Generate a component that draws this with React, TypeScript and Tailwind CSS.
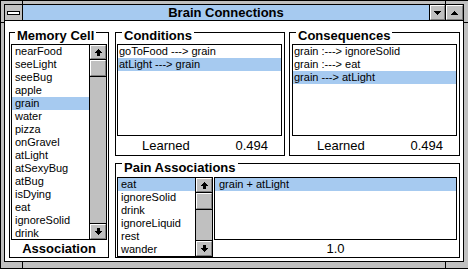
import React from 'react';

const memoryCells = [
  'nearFood', 'seeLight', 'seeBug', 'apple', 'grain', 'water', 'pizza', 'onGravel',
  'atLight', 'atSexyBug', 'atBug', 'isDying', 'eat', 'ignoreSolid', 'drink',
];
const conditions = ['goToFood ---> grain', 'atLight ---> grain'];
const consequences = ['grain :---> ignoreSolid', 'grain :---> eat', 'grain ---> atLight'];
const painActions = ['eat', 'ignoreSolid', 'drink', 'ignoreLiquid', 'rest', 'wander'];
const painPairs = ['grain + atLight'];

// little pixel glyphs, drawn as rects so they stay crisp
const ScrollUp = () => (
  <svg width="7" height="7" viewBox="0 0 7 7" shapeRendering="crispEdges">
    <rect x="3" y="0" width="1" height="1" fill="#000" />
    <rect x="2" y="1" width="3" height="1" fill="#000" />
    <rect x="1" y="2" width="5" height="1" fill="#000" />
    <rect x="0" y="3" width="7" height="1" fill="#000" />
    <rect x="2" y="4" width="3" height="3" fill="#000" />
  </svg>
);

const ScrollDown = () => (
  <svg width="7" height="7" viewBox="0 0 7 7" shapeRendering="crispEdges">
    <rect x="2" y="0" width="3" height="3" fill="#000" />
    <rect x="0" y="3" width="7" height="1" fill="#000" />
    <rect x="1" y="4" width="5" height="1" fill="#000" />
    <rect x="2" y="5" width="3" height="1" fill="#000" />
    <rect x="3" y="6" width="1" height="1" fill="#000" />
  </svg>
);

const Triangle = ({ up }: { up?: boolean }) => (
  <svg width="7" height="4" viewBox="0 0 7 4" shapeRendering="crispEdges">
    <rect x="0" y={up ? 3 : 0} width="7" height="1" fill="#000" />
    <rect x="1" y={up ? 2 : 1} width="5" height="1" fill="#000" />
    <rect x="2" y={up ? 1 : 2} width="3" height="1" fill="#000" />
    <rect x="3" y={up ? 0 : 3} width="1" height="1" fill="#000" />
  </svg>
);

const Bevel: React.FC<{ children?: React.ReactNode }> = ({ children }) => (
  <div className="flex h-full w-full items-center justify-center border border-t-white border-l-white border-b-[#808080] border-r-[#808080] bg-[#c0c0c0]">
    {children}
  </div>
);

function ScrollBar() {
  return (
    <div className="flex w-[17px] shrink-0 flex-col border-l border-black bg-[#c0c0c0]">
      <div className="h-[15px] shrink-0 border-b border-black">
        <Bevel>
          <ScrollUp />
        </Bevel>
      </div>
      <div className="h-[17px] shrink-0 border-b border-black">
        <Bevel />
      </div>
      <div className="flex-1" />
      <div className="h-[16px] shrink-0 border-t border-black">
        <Bevel>
          <ScrollDown />
        </Bevel>
      </div>
    </div>
  );
}

interface ListBoxProps {
  items: string[];
  selected: number;
  className: string;
  pad: string;
  scroll?: boolean;
}

function ListBox({ items, selected, className, pad, scroll }: ListBoxProps) {
  return (
    <div className={`flex shrink-0 border border-black bg-white ${className}`}>
      <div className="flex min-w-0 flex-1 flex-col overflow-hidden">
        {items.map((item, i) => (
          <div
            key={item}
            className={`h-[13px] shrink-0 whitespace-nowrap text-[11px] leading-[13px] ${pad} ${
              i === selected ? 'bg-[#a6caf0]' : ''
            }`}
          >
            {item}
          </div>
        ))}
      </div>
      {scroll && <ScrollBar />}
    </div>
  );
}

interface GroupProps {
  label: string;
  className: string;
  labelClass: string;
  children: React.ReactNode;
}

function Group({ label, className, labelClass, children }: GroupProps) {
  return (
    <div className={`flex shrink-0 flex-col border border-black ${className}`}>
      <div className={`h-[15px] self-start whitespace-nowrap bg-white px-[2px] text-[13px] font-bold leading-[15px] ${labelClass}`}>
        {label}
      </div>
      {children}
    </div>
  );
}

export default function App() {
  return (
    <div className="relative h-[269px] w-[468px] overflow-hidden border-b border-l border-t border-black bg-[#c0c0c0] pb-[6px] pl-[3px] pr-[4px] pt-[3px] font-['Liberation_Sans',Arial,sans-serif] text-black">
      {/* frame corner notches */}
      <div className="absolute left-[21px] top-0 h-[3px] w-px bg-black" />
      <div className="absolute left-[444px] top-0 h-[3px] w-px bg-black" />
      <div className="absolute bottom-0 left-[21px] h-[6px] w-px bg-black" />
      <div className="absolute bottom-0 left-[444px] h-[6px] w-px bg-black" />
      <div className="absolute left-0 top-[21px] h-px w-[3px] bg-black" />
      <div className="absolute left-[463px] top-[21px] h-px w-[4px] bg-black" />

      <div className="flex h-full flex-col border border-black">
        {/* Title bar */}
        <div className="flex h-[16px] shrink-0 border-b border-black">
          <div className="flex w-[18px] shrink-0 items-center justify-center border-r border-black bg-[#c0c0c0]">
            <div className="h-[4px] w-[13px] border border-black bg-white" />
          </div>
          <div className="flex flex-1 items-center justify-center bg-[#a6caf0] text-[13px] font-bold leading-none">
            Brain Connections
          </div>
          <div className="w-[16px] shrink-0 border-l border-black">
            <Bevel>
              <Triangle />
            </Bevel>
          </div>
          <div className="w-[18px] shrink-0 border-l border-black">
            <Bevel>
              <Triangle up />
            </Bevel>
          </div>
        </div>

        {/* Client area */}
        <div className="flex flex-1 gap-[6px] bg-white pb-[3px] pl-[4px] pr-[3px] pt-[11px]">
          <Group label="Memory Cell" className="h-[226px] w-[100px]" labelClass="-mt-[5px] ml-[5px]">
            <ListBox
              items={memoryCells}
              selected={4}
              className="ml-[1px] mt-[1px] h-[196px] w-[96px]"
              pad="pl-[3px]"
              scroll
            />
            <div className="flex flex-1 items-center justify-center text-[13px] font-bold leading-none">
              Association
            </div>
          </Group>

          <div className="flex w-[345px] flex-col gap-[7px]">
            <div className="flex h-[124px] gap-[4px]">
              <Group label="Conditions" className="h-[124px] w-[170px]" labelClass="-mt-[5px] ml-[6px]">
                <ListBox
                  items={conditions}
                  selected={1}
                  className="ml-[1px] mt-[1px] h-[92px] w-[165px]"
                  pad="pl-[1px]"
                />
                <div className="flex flex-1 items-center justify-between pl-[26px] pr-[16px] text-[13px] leading-none">
                  <span>Learned</span>
                  <span>0.494</span>
                </div>
              </Group>
              <Group label="Consequences" className="h-[124px] w-[171px]" labelClass="-mt-[5px] ml-[6px]">
                <ListBox
                  items={consequences}
                  selected={2}
                  className="ml-[2px] mt-[1px] h-[92px] w-[165px]"
                  pad="pl-[1px]"
                />
                <div className="flex flex-1 items-center justify-between pl-[27px] pr-[16px] text-[13px] leading-none">
                  <span>Learned</span>
                  <span>0.494</span>
                </div>
              </Group>
            </div>

            <Group label="Pain Associations" className="h-[95px] w-[345px]" labelClass="-mt-[4px] ml-[6px]">
              <div className="mt-[2px] flex min-h-0 flex-1">
                <ListBox
                  items={painActions}
                  selected={0}
                  className="ml-[1px] h-full w-[96px]"
                  pad="pl-[3px]"
                  scroll
                />
                <div className="ml-[1px] flex w-[243px] flex-col">
                  <ListBox
                    items={painPairs}
                    selected={0}
                    className="h-[63px] w-[243px]"
                    pad="pl-[4px]"
                  />
                  <div className="flex flex-1 items-center justify-center text-[13px] leading-none">1.0</div>
                </div>
              </div>
            </Group>
          </div>
        </div>
      </div>
    </div>
  );
}
